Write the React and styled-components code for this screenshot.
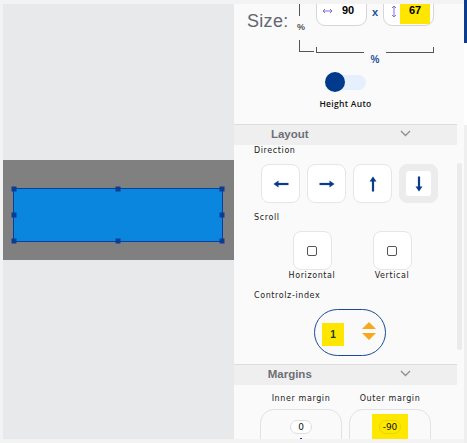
import React from 'react'
import styled, { createGlobalStyle } from 'styled-components'

const GlobalStyle = createGlobalStyle`
  body {
    margin: 0;
    background: #f3f3f3;
    font-family: "DejaVu Sans", sans-serif;
  }
`

const Page = styled.div`
  display: flex;
  height: 443px;
  padding-left: 3px;
  box-sizing: border-box;
  overflow: hidden;
`

const Canvas = styled.div`
  width: 231px;
  margin: 4px 0;
  background: #e8e9eb;
  padding-top: 156px;
  box-sizing: border-box;
`

const Stage = styled.div`
  height: 100px;
  background: #808080;
  padding: 28px 11px 0 10px;
  box-sizing: border-box;
`

const Block = styled.div`
  position: relative;
  height: 54px;
  background: #0b86df;
  border: 1px solid #0a3f9c;
  box-sizing: border-box;
`

const Handle = styled.span`
  position: absolute;
  width: 5px;
  height: 5px;
  background: #0a3c94;
  left: ${p => p.$x};
  top: ${p => p.$y};
  transform: translate(-50%, -50%);
`

const Panel = styled.div`
  display: flex;
  width: 230px;
  margin: 4px 0;
  background: #fafafa;
  overflow: hidden;
`

const Content = styled.div`
  width: 223px;
  flex-shrink: 0;
  margin-top: -14px;
`

const Gutter = styled.div`
  width: 7px;
  padding-top: 159px;
`

const Track = styled.div`
  width: 5px;
  height: 187px;
  border-radius: 3px;
  background: #ebebeb;
`

const Edge = styled.div`
  width: 3px;
  display: flex;
  flex-direction: column;
  background: #efefef;
`

const EdgePart = styled.div`
  height: ${p => p.$h}px;
  background: ${p => p.$c};
`

const SizeRow = styled.div`
  display: flex;
  padding-left: 13px;
`

const SizeLabel = styled.div`
  width: 52px;
  margin-top: 21px;
  font-family: "Liberation Sans", sans-serif;
  font-size: 18px;
  line-height: 20px;
  letter-spacing: 0.3px;
  color: #62666e;
`

const VBracket = styled.div`
  width: 17px;
  display: flex;
  flex-direction: column;
`

const VSeg = styled.div`
  height: ${p => p.$h}px;
  width: 15px;
  border-left: 1px solid #555;
  border-bottom: ${p => (p.$end ? '1px solid #555' : 'none')};
  box-sizing: border-box;
`

const Pct = styled.div`
  font-family: "Liberation Sans", sans-serif;
  font-weight: bold;
  font-size: ${p => (p.$blue ? 10 : 9)}px;
  color: ${p => (p.$blue ? '#1d4f9e' : '#555')};
`

const VPct = styled(Pct)`
  height: 24px;
  padding-top: 6px;
  margin-left: -2px;
  box-sizing: border-box;
`

const Dims = styled.div`
  display: flex;
  flex-direction: column;
`

const InputsRow = styled.div`
  display: flex;
  align-items: center;
  height: 36px;
`

const DimBox = styled.div`
  width: 51px;
  height: 36px;
  border: 1px solid #d6d6d6;
  border-radius: 9px;
  background: #fff;
  box-sizing: border-box;
  display: flex;
  align-items: flex-end;
  padding: 0 3px 9px 4px;
`

const DimIcon = styled.span`
  width: 12px;
  display: flex;
  justify-content: center;
  margin-bottom: ${p => p.$v ? -2 : 2}px;
`

const DimValue = styled.div`
  flex: 1;
  height: ${p => (p.$hi ? 30 : 'auto')}px;
  margin-bottom: ${p => (p.$hi ? -8 : 0)}px;
  background: ${p => (p.$hi ? '#ffe600' : 'transparent')};
  display: flex;
  align-items: ${p => (p.$hi ? 'flex-end' : 'center')};
  padding-bottom: ${p => (p.$hi ? 8 : 0)}px;
  justify-content: center;
  font-family: "Liberation Sans", sans-serif;
  font-weight: bold;
  font-size: 11px;
  color: #000;
  box-sizing: border-box;
`

const Times = styled.div`
  width: 16px;
  text-align: center;
  padding-top: 8px;
  font-family: "Liberation Sans", sans-serif;
  font-weight: bold;
  font-size: 11px;
  color: #1d4f9e;
`

const HBracket = styled.div`
  display: flex;
  margin-top: 21px;
`

const HSeg = styled.div`
  width: 48px;
  height: 6px;
  border-bottom: 1px solid #555;
  border-left: ${p => (p.$side === 'l' ? '1px solid #555' : 'none')};
  border-right: ${p => (p.$side === 'r' ? '1px solid #555' : 'none')};
  box-sizing: border-box;
`

const HPct = styled(Pct)`
  width: 22px;
  text-align: center;
  padding-top: 7px;
`

const Center = styled.div`
  display: flex;
  flex-direction: column;
  align-items: center;
`

const Toggle = styled.div`
  margin-top: 7px;
  width: 41px;
  height: 20px;
  display: flex;
  align-items: center;
  position: relative;
`

const ToggleTrack = styled.div`
  margin-left: 1px;
  width: 40px;
  height: 15px;
  border-radius: 8px;
  background: #e6effd;
`

const ToggleKnob = styled.div`
  position: absolute;
  left: 0;
  top: 0;
  width: 20px;
  height: 20px;
  border-radius: 50%;
  background: #003a8c;
`

const SmallBold = styled.div`
  margin-top: 7px;
  font-family: "Open Sans", sans-serif;
  font-size: 8.5px;
  line-height: 10px;
  font-weight: 600;
  letter-spacing: 0.3px;
  color: #111;
`

const SectionHead = styled.div`
  display: grid;
  grid-template-columns: 1fr 1fr;
  align-items: center;
  height: 20px;
  margin-top: ${p => p.$mt}px;
  border-top: 1px solid #dcdcdc;
  background: #efefef;
  font-family: "Liberation Sans", sans-serif;
  font-weight: bold;
  font-size: 11.5px;
  color: #6e6f78;
  text-align: center;
`

const HeadTitle = styled.span`
  margin-top: -2px;
`

const Chevron = () => (
  <svg width="11" height="7" viewBox="0 0 11 7" style={{ justifySelf: 'center', marginLeft: 8, marginTop: -3 }}>
    <polyline points="1,1 5.5,5.5 10,1" fill="none" stroke="#909090" strokeWidth="1.4" />
  </svg>
)

const FieldLabel = styled.div`
  margin-top: ${p => p.$mt}px;
  padding-left: 20px;
  font-size: 8px;
  line-height: 10px;
  letter-spacing: 0.6px;
  color: #1a1a1a;
`

const DirRow = styled.div`
  display: flex;
  gap: 7px;
  margin-top: 8px;
  padding-left: 27px;
`

const Tile = styled.div`
  width: 39px;
  height: 39px;
  box-sizing: border-box;
  border-radius: 8px;
  border: 1px solid ${p => (p.$on ? '#ececec' : '#e6e6e6')};
  background: ${p => (p.$on ? '#ececec' : '#fff')};
  display: flex;
  align-items: center;
  justify-content: center;
`

const TileInner = styled.div`
  width: 25px;
  height: 25px;
  border-radius: 3px;
  background: #fff;
  display: flex;
  align-items: center;
  justify-content: center;
`

const Arrow = ({ rot }) => (
  <svg width="18" height="18" viewBox="0 0 18 18" style={{ transform: `rotate(${rot}deg)` }}>
    <line x1="5" y1="9" x2="16.5" y2="9" stroke="#0b3c8c" strokeWidth="2.2" />
    <polygon points="1.5,9 6.5,5.5 6.5,12.5" fill="#0b3c8c" />
  </svg>
)

const ScrollRow = styled.div`
  display: flex;
  margin-top: 8px;
  padding-left: 38px;
`

const ScrollCol = styled.div`
  width: 80px;
  display: flex;
  flex-direction: column;
  align-items: center;
`

const CheckBox = styled.div`
  width: 10px;
  height: 10px;
  border: 1.4px solid #555;
  border-radius: 2px;
  box-sizing: border-box;
`

const ColLabel = styled.div`
  margin-top: 1px;
  font-size: 8px;
  line-height: 10px;
  letter-spacing: 0.6px;
  color: #1a1a1a;
`

const ZPill = styled.div`
  margin: 8px 0 0 80px;
  width: 72px;
  height: 47px;
  box-sizing: border-box;
  border: 1px solid #1a4a9c;
  border-radius: 24px;
  display: flex;
  align-items: center;
  padding: 3px 0 0 7px;
`

const ZValue = styled.div`
  width: 22px;
  height: 23px;
  background: #ffe600;
  display: flex;
  align-items: center;
  justify-content: center;
  font-family: "Liberation Sans", sans-serif;
  font-weight: bold;
  font-size: 10px;
  color: #1b3a1b;
`

const Stepper = () => (
  <svg width="16" height="22" viewBox="0 0 16 22" style={{ marginLeft: 17, marginTop: -4 }}>
    <polygon points="8,1 15,8 1,8" fill="#f7a81e" />
    <polygon points="1,12 15,12 8,19" fill="#f7a81e" />
  </svg>
)

const MarginRow = styled.div`
  display: flex;
  gap: 7px;
  padding-left: 26px;
  margin-top: 9px;
`

const MarginCol = styled.div`
  width: 82px;
  display: flex;
  flex-direction: column;
  align-items: center;
`

const MarginLabel = styled(ColLabel)`
  margin-top: 0;
  margin-bottom: 5px;
`

const MarginBox = styled.div`
  width: 82px;
  height: 50px;
  box-sizing: border-box;
  border: 1px solid #e3e3e3;
  border-radius: 14px;
  display: flex;
  flex-direction: column;
  align-items: center;
`

const ValueZone = styled.div`
  margin-top: ${p => (p.$hi ? 4 : 10)}px;
  padding: ${p => (p.$hi ? '6px 7px' : '0')};
  background: ${p => (p.$hi ? '#ffe800' : 'transparent')};
`

const ValuePill = styled.div`
  min-width: 22px;
  height: 14px;
  padding: 0 1px;
  box-sizing: border-box;
  border: 1px solid ${p => (p.$hi ? '#e8d400' : '#dedede')};
  border-radius: 7px;
  background: ${p => (p.$hi ? 'transparent' : '#fff')};
  display: flex;
  align-items: center;
  justify-content: center;
  font-size: 9px;
  color: #111;
`

const Tick = styled.div`
  width: 2px;
  height: 4px;
  margin-top: 4px;
  background: #0b3c8c;
`

const handles = [
  ['0%', '0%'], ['50%', '0%'], ['100%', '0%'],
  ['0%', '50%'], ['100%', '50%'],
  ['0%', '100%'], ['50%', '100%'], ['100%', '100%'],
]

const HArrowIcon = () => (
  <svg width="11" height="6" viewBox="0 0 11 6">
    <line x1="2" y1="3" x2="9" y2="3" stroke="#7a6fe0" strokeWidth="1" />
    <polyline points="3,1 1,3 3,5" fill="none" stroke="#7a6fe0" strokeWidth="1" />
    <polyline points="8,1 10,3 8,5" fill="none" stroke="#7a6fe0" strokeWidth="1" />
  </svg>
)

const VArrowIcon = () => (
  <svg width="6" height="13" viewBox="0 0 6 13">
    <line x1="3" y1="2" x2="3" y2="11" stroke="#7a6fe0" strokeWidth="1" />
    <polyline points="1,3 3,1 5,3" fill="none" stroke="#7a6fe0" strokeWidth="1" />
    <polyline points="1,10 3,12 5,10" fill="none" stroke="#7a6fe0" strokeWidth="1" />
  </svg>
)

export default function App() {
  return (
    <>
      <GlobalStyle />
      <Page>
        <Canvas>
          <Stage>
            <Block>
              {handles.map(([x, y]) => (
                <Handle key={x + y} $x={x} $y={y} />
              ))}
            </Block>
          </Stage>
        </Canvas>

        <Panel>
          <Content>
            <SizeRow>
              <SizeLabel>Size:</SizeLabel>
              <VBracket>
                <VSeg $h={26} />
                <VPct>%</VPct>
                <VSeg $h={12} $end />
              </VBracket>
              <Dims>
                <InputsRow>
                  <DimBox>
                    <DimIcon><HArrowIcon /></DimIcon>
                    <DimValue>90</DimValue>
                  </DimBox>
                  <Times>x</Times>
                  <DimBox>
                    <DimIcon $v><VArrowIcon /></DimIcon>
                    <DimValue $hi>67</DimValue>
                  </DimBox>
                </InputsRow>
                <HBracket>
                  <HSeg $side="l" />
                  <HPct $blue>%</HPct>
                  <HSeg $side="r" />
                </HBracket>
              </Dims>
            </SizeRow>

            <Center>
              <Toggle>
                <ToggleTrack />
                <ToggleKnob />
              </Toggle>
              <SmallBold>Height Auto</SmallBold>
            </Center>

            <SectionHead $mt={15}>
              <HeadTitle>Layout</HeadTitle>
              <Chevron />
            </SectionHead>

            <FieldLabel $mt={1}>Direction</FieldLabel>
            <DirRow>
              <Tile><Arrow rot={0} /></Tile>
              <Tile><Arrow rot={180} /></Tile>
              <Tile><Arrow rot={90} /></Tile>
              <Tile $on><TileInner><Arrow rot={-90} /></TileInner></Tile>
            </DirRow>

            <FieldLabel $mt={10}>Scroll</FieldLabel>
            <ScrollRow>
              <ScrollCol>
                <Tile><CheckBox /></Tile>
                <ColLabel>Horizontal</ColLabel>
              </ScrollCol>
              <ScrollCol>
                <Tile><CheckBox /></Tile>
                <ColLabel>Vertical</ColLabel>
              </ScrollCol>
            </ScrollRow>

            <FieldLabel $mt={10}>Controlz-index</FieldLabel>
            <ZPill>
              <ZValue>1</ZValue>
              <Stepper />
            </ZPill>

            <SectionHead $mt={8}>
              <HeadTitle>Margins</HeadTitle>
              <Chevron />
            </SectionHead>

            <MarginRow>
              <MarginCol>
                <MarginLabel>Inner margin</MarginLabel>
                <MarginBox>
                  <ValueZone>
                    <ValuePill>0</ValuePill>
                  </ValueZone>
                  <Tick />
                </MarginBox>
              </MarginCol>
              <MarginCol>
                <MarginLabel>Outer margin</MarginLabel>
                <MarginBox>
                  <ValueZone $hi>
                    <ValuePill $hi>-90</ValuePill>
                  </ValueZone>
                </MarginBox>
              </MarginCol>
            </MarginRow>
          </Content>
          <Gutter>
            <Track />
          </Gutter>
        </Panel>

        <Edge>
          <EdgePart $h={43} $c="#0d3b8e" />
          <EdgePart $h={82} $c="#ffffff" />
        </Edge>
      </Page>
    </>
  )
}
